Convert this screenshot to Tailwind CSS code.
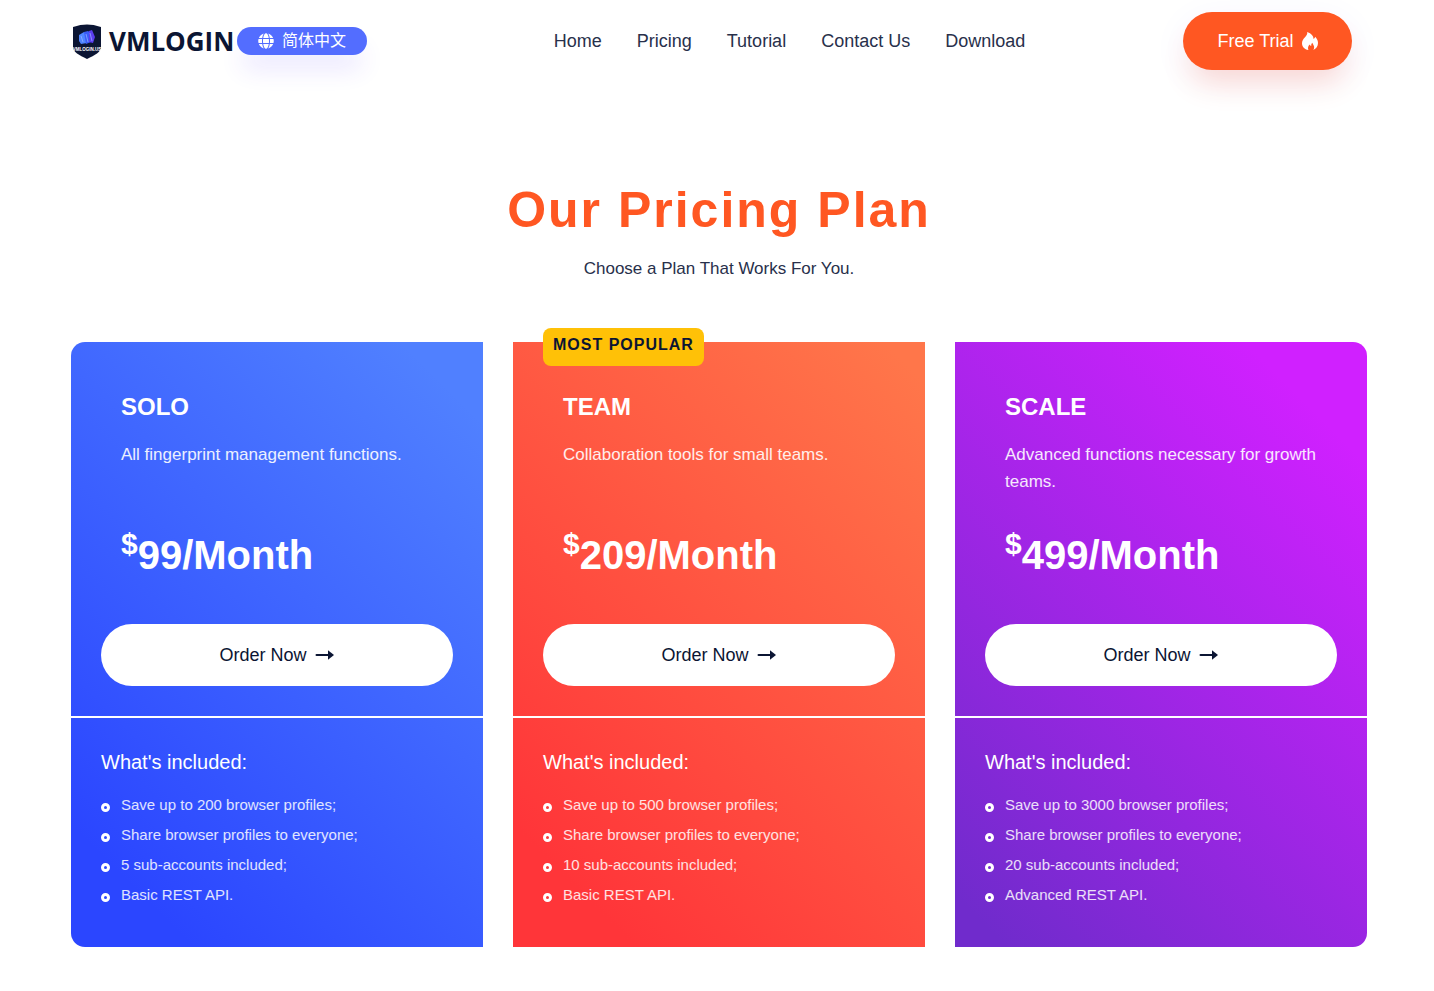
<!DOCTYPE html>
<html lang="en">
<head>
  <meta charset="UTF-8">
  <meta name="viewport" content="width=device-width, initial-scale=1.0">
  <title>VMLogin - Pricing</title>
  <script src="https://cdn.jsdelivr.net/npm/@tailwindcss/browser@4"></script>
</head>
<body class="bg-white pl-1 font-['Liberation_Sans','Noto_Sans_CJK_SC',sans-serif] text-[#0b1533]">

  <!-- Header -->
  <header class="mx-auto flex max-w-[1296px] items-center justify-between py-3">
    <div class="flex items-center">
      <a href="#" class="flex w-[166px] items-center gap-2 pl-0.5">
        <svg class="h-[35px] w-7 shrink-0" viewBox="0 0 28 35" aria-hidden="true">
          <path d="M14 .5C18 .5 23 1.300 28 3v20c0 5-6 8-14 12C6 31 0 28 0 23V3C5 1.300 10 .5 14 .5z" fill="#0b1533"/>
          <path d="M6 11l5-3 3 1v10l-6 1-2-3z" fill="#4f86ff"/>
          <path d="M11 8l4-1 3 2v9l-5 2z" fill="#3a5cf5"/>
          <path d="M16 7l3-1 3 7-2 6-4-1z" fill="#5b3df0"/>
          <path d="M8 12l2 6M13 10l2 8M17 9l2 8" stroke="#9db8ff" stroke-width=".7"/>
          <text x="14" y="27" text-anchor="middle" font-size="4.500" font-weight="700" fill="#fff">VMLOGIN.US</text>
        </svg>
        <span class="font-['Open_Sans',sans-serif] text-[26px] leading-[34px] font-bold">VMLOGIN</span>
      </a>
      <a href="#" class="flex h-7 w-[130px] items-center justify-center gap-2 rounded-full bg-[#536dff] text-base text-white shadow-[0_18px_24px_-4px_rgba(83,50,255,0.12)]">
        <svg class="size-4" viewBox="0 0 496 512" fill="currentColor" aria-hidden="true">
          <path d="M336.500 160C322 70.700 287.800 8 248 8s-74 62.700-88.500 152h177zM152 256c0 22.200 1.200 43.500 3.300 64h185.300c2.100-20.500 3.300-41.800 3.300-64s-1.200-43.500-3.300-64H155.300c-2.100 20.500-3.300 41.800-3.300 64zm324.700-96c-28.600-67.900-86.500-120.400-158-141.600 24.400 33.800 41.200 84.700 50 141.600h108zM177.200 18.400C105.800 39.600 47.800 92.100 19.300 160h108c8.700-56.900 25.500-107.800 49.900-141.600zM487.400 192H372.700c2.100 21 3.300 42.500 3.300 64s-1.200 43-3.300 64h114.600c5.500-20.500 8.600-41.800 8.600-64s-3.100-43.500-8.500-64zM120 256c0-21.500 1.200-43 3.300-64H8.600C3.200 212.500 0 233.800 0 256s3.200 43.500 8.600 64h114.600c-2-21-3.200-42.500-3.200-64zm39.500 96c14.500 89.300 48.700 152 88.500 152s74-62.700 88.500-152h-177zm159.300 141.600c71.400-21.200 129.400-73.700 158-141.600h-108c-8.800 56.900-25.600 107.800-50 141.600zM19.300 352c28.600 67.900 86.500 120.400 158 141.600-24.400-33.800-41.200-84.700-50-141.600h-108z"/>
        </svg>
        <span lang="zh-CN">简体中文</span>
      </a>
    </div>

    <nav class="flex gap-[35px] pl-[29px] text-lg text-[#28304b]">
      <a href="#">Home</a>
      <a href="#">Pricing</a>
      <a href="#">Tutorial</a>
      <a href="#">Contact Us</a>
      <a href="#">Download</a>
    </nav>

    <button type="button" class="mr-[15px] flex h-[58px] w-[169px] items-center justify-center gap-2 rounded-full bg-[#ff5722] text-lg text-white shadow-[0_20px_30px_-8px_rgba(255,87,34,0.2),0_8px_36px_rgba(83,50,255,0.06)]">
      Free Trial
      <svg class="h-[18px] w-4" viewBox="0 0 16 18" fill="currentColor" aria-hidden="true">
        <path d="M5.200 0C9.500 1.500 11.500 4 11.600 7c.9-.5 1.400-1.300 1.600-2.300C15 6.500 16 8.700 16 11c0 3.200-1.800 5.800-4.700 7 .9-1.300 1.100-2.900.5-4.300-.4-1.100-1.100-1.800-1.500-2.900-.9.900-1.200 2-1 3.200-.8-.1-1.400-.6-1.700-1.400-1.500 1.500-2 3.400-1.200 5.400C2.500 17.400 0 14.800 0 11.200c0-2.600 1.300-4.300 3-6C4.500 3.700 5.600 2.200 5.200 0z"/>
      </svg>
    </button>
  </header>

  <!-- Pricing -->
  <main class="mx-auto max-w-[1296px] pt-[98px] pb-10">
    <div class="text-center">
      <h1 class="text-[50px] leading-[60px] font-bold tracking-[2px] text-[#ff5722]">Our Pricing Plan</h1>
      <p class="mt-[15px] text-[17px] leading-[27px] text-[#28304b]">Choose a Plan That Works For You.</p>
    </div>

    <div class="mt-[60px] grid grid-cols-3 gap-[30px] text-white">

      <section class="rounded-l-[14px] bg-linear-[45deg,#2b46ff_12%,#5080ff_92%]">
        <div class="px-[30px] pt-[50px] pb-[30px]">
          <div class="px-5">
            <h2 class="text-2xl leading-[29px] font-bold">SOLO</h2>
            <p class="mt-5 h-[54px] text-[17px] leading-[27px] text-white/90">All fingerprint management functions.</p>
            <p class="mt-9 text-[40px] leading-[48px] font-bold"><sup>$</sup>99/Month</p>
          </div>
          <button type="button" class="mt-[45px] flex h-[62px] w-full items-center justify-center gap-2 rounded-full bg-white text-lg text-[#0b1533]">
            Order Now
            <svg class="h-3 w-5" viewBox="0 0 20 12" aria-hidden="true">
              <path d="M1.500 6H14" stroke="currentColor" stroke-width="2" stroke-linecap="round"/>
              <path d="M13 1.200L19 6l-6 4.800z" fill="currentColor"/>
            </svg>
          </button>
        </div>
        <div class="border-t-2 border-white px-[30px] pt-[30px] pb-[37px]">
          <h3 class="text-xl leading-7">What's included:</h3>
          <ul class="mt-3.5 text-[15px] leading-[30px] text-white/85">
            <li class="flex items-center gap-[11px]"><span class="mt-1 size-[9px] rounded-full border-3 border-white"></span>Save up to 200 browser profiles;</li>
            <li class="flex items-center gap-[11px]"><span class="mt-1 size-[9px] rounded-full border-3 border-white"></span>Share browser profiles to everyone;</li>
            <li class="flex items-center gap-[11px]"><span class="mt-1 size-[9px] rounded-full border-3 border-white"></span>5 sub-accounts included;</li>
            <li class="flex items-center gap-[11px]"><span class="mt-1 size-[9px] rounded-full border-3 border-white"></span>Basic REST API.</li>
          </ul>
        </div>
      </section>

      <section class="relative bg-linear-[45deg,#ff3539_12%,#ff764a_96%]">
        <span class="absolute -top-3.5 left-[30px] h-[38px] rounded-lg bg-[#ffc107] px-2.5 pt-[5px] leading-6 font-bold tracking-[1px] text-[#0b1533]">MOST POPULAR</span>
        <div class="px-[30px] pt-[50px] pb-[30px]">
          <div class="px-5">
            <h2 class="text-2xl leading-[29px] font-bold">TEAM</h2>
            <p class="mt-5 h-[54px] text-[17px] leading-[27px] text-white/90">Collaboration tools for small teams.</p>
            <p class="mt-9 text-[40px] leading-[48px] font-bold"><sup>$</sup>209/Month</p>
          </div>
          <button type="button" class="mt-[45px] flex h-[62px] w-full items-center justify-center gap-2 rounded-full bg-white text-lg text-[#0b1533]">
            Order Now
            <svg class="h-3 w-5" viewBox="0 0 20 12" aria-hidden="true">
              <path d="M1.500 6H14" stroke="currentColor" stroke-width="2" stroke-linecap="round"/>
              <path d="M13 1.200L19 6l-6 4.800z" fill="currentColor"/>
            </svg>
          </button>
        </div>
        <div class="border-t-2 border-white px-[30px] pt-[30px] pb-[37px]">
          <h3 class="text-xl leading-7">What's included:</h3>
          <ul class="mt-3.5 text-[15px] leading-[30px] text-white/85">
            <li class="flex items-center gap-[11px]"><span class="mt-1 size-[9px] rounded-full border-3 border-white"></span>Save up to 500 browser profiles;</li>
            <li class="flex items-center gap-[11px]"><span class="mt-1 size-[9px] rounded-full border-3 border-white"></span>Share browser profiles to everyone;</li>
            <li class="flex items-center gap-[11px]"><span class="mt-1 size-[9px] rounded-full border-3 border-white"></span>10 sub-accounts included;</li>
            <li class="flex items-center gap-[11px]"><span class="mt-1 size-[9px] rounded-full border-3 border-white"></span>Basic REST API.</li>
          </ul>
        </div>
      </section>

      <section class="rounded-r-[14px] bg-linear-[45deg,#702bcc_5%,#d020ff_88%]">
        <div class="px-[30px] pt-[50px] pb-[30px]">
          <div class="px-5">
            <h2 class="text-2xl leading-[29px] font-bold">SCALE</h2>
            <p class="mt-5 h-[54px] text-[17px] leading-[27px] text-white/90">Advanced functions necessary for growth teams.</p>
            <p class="mt-9 text-[40px] leading-[48px] font-bold"><sup>$</sup>499/Month</p>
          </div>
          <button type="button" class="mt-[45px] flex h-[62px] w-full items-center justify-center gap-2 rounded-full bg-white text-lg text-[#0b1533]">
            Order Now
            <svg class="h-3 w-5" viewBox="0 0 20 12" aria-hidden="true">
              <path d="M1.500 6H14" stroke="currentColor" stroke-width="2" stroke-linecap="round"/>
              <path d="M13 1.200L19 6l-6 4.800z" fill="currentColor"/>
            </svg>
          </button>
        </div>
        <div class="border-t-2 border-white px-[30px] pt-[30px] pb-[37px]">
          <h3 class="text-xl leading-7">What's included:</h3>
          <ul class="mt-3.5 text-[15px] leading-[30px] text-white/85">
            <li class="flex items-center gap-[11px]"><span class="mt-1 size-[9px] rounded-full border-3 border-white"></span>Save up to 3000 browser profiles;</li>
            <li class="flex items-center gap-[11px]"><span class="mt-1 size-[9px] rounded-full border-3 border-white"></span>Share browser profiles to everyone;</li>
            <li class="flex items-center gap-[11px]"><span class="mt-1 size-[9px] rounded-full border-3 border-white"></span>20 sub-accounts included;</li>
            <li class="flex items-center gap-[11px]"><span class="mt-1 size-[9px] rounded-full border-3 border-white"></span>Advanced REST API.</li>
          </ul>
        </div>
      </section>

    </div>
  </main>

</body>
</html>
